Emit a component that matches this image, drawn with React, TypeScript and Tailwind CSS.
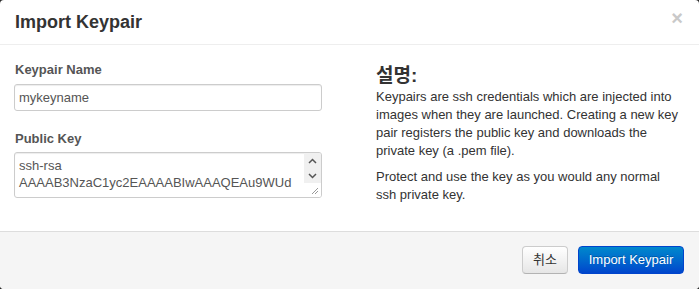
import React from 'react';

const font = "font-['Liberation_Sans','Noto_Sans_CJK_KR',sans-serif]";

const ScrollArrow = ({ up }: { up?: boolean }) => (
  <svg width="9" height="6" viewBox="0 0 9 6" className="block">
    <path
      d={up ? 'M1 5 L4.5 1.5 L8 5' : 'M1 1 L4.5 4.5 L8 1'}
      fill="none"
      stroke="#555"
      strokeWidth="1.5"
    />
  </svg>
);

const App: React.FC = () => {
  return (
    <div className={`w-[699px] h-[289px] bg-[#2a2a2a] ${font}`}>
      <div className="w-full h-full bg-white rounded-[4px] overflow-hidden flex flex-col">
        {/* Header */}
        <div className="h-[45px] shrink-0 border-b border-[#eee] flex items-start justify-between pl-[15px] pr-[16px]">
          <h3 className="mt-[7px] text-[18px] leading-[30px] font-bold text-[#333]">Import Keypair</h3>
          <span className="mt-[8px] text-[20px] leading-[20px] font-bold text-[#c9c9c9]">×</span>
        </div>

        {/* Body */}
        <div className="flex-1 flex pl-[14px] pr-[15px]">
          <div className="w-[308px] pt-[16px]">
            <label className="block text-[13px] leading-[18px] font-bold text-[#555] pl-[1px] mb-[5px]">Keypair Name</label>
            <div className="h-[27px] border border-[#ccc] rounded-[3px] shadow-[inset_0_1px_1px_rgba(0,0,0,0.075)] flex items-center px-[4px] text-[13px] text-[#555]">
              mykeyname
            </div>
            <label className="block mt-[19px] text-[13px] leading-[18px] font-bold text-[#555] pl-[1px] mb-[4px]">Public Key</label>
            <div className="h-[46px] border border-[#ccc] rounded-[3px] shadow-[inset_0_1px_1px_rgba(0,0,0,0.075)] flex overflow-hidden">
              <div className="flex-1 overflow-hidden pl-[4px] pt-[4px] text-[13px] leading-[17px] text-[#555] whitespace-nowrap">
                <div>ssh-rsa</div>
                <div>AAAAB3NzaC1yc2EAAAABIwAAAQEAu9WUd</div>
              </div>
              <div className="w-[17px] flex flex-col">
                <div className="h-[15px] bg-[#f0f0f0] flex items-center justify-center"><ScrollArrow up /></div>
                <div className="h-[15px] bg-[#f0f0f0] flex items-center justify-center"><ScrollArrow /></div>
                <div className="flex-1 bg-white flex items-end justify-end pr-[2px] pb-[2px]">
                  <svg width="8" height="8" viewBox="0 0 8 8">
                    <path d="M7 1 L1 7 M7 4 L4 7" stroke="#999" strokeWidth="1" />
                  </svg>
                </div>
              </div>
            </div>
          </div>

          <div className="w-[304px] ml-[54px] pt-[21px] text-[#333]">
            <h3 className="text-[19px] leading-[20px] font-bold mb-[2px]">설명:</h3>
            <p className="text-[13px] leading-[18px] mb-[8px]">
              Keypairs are ssh credentials which are injected into images when they are launched. Creating a new key pair registers the public key and downloads the private key (a .pem file).
            </p>
            <p className="text-[13px] leading-[18px]">
              Protect and use the key as you would any normal ssh private key.
            </p>
          </div>
        </div>

        {/* Footer */}
        <div className="h-[58px] shrink-0 border-t border-[#ddd] bg-[#f5f5f5] flex items-start justify-end gap-[10px] pt-[14px] pr-[15px]">
          <button className="h-[28px] w-[46px] rounded-[4px] border border-[#ccc] border-b-[#b3b3b3] bg-linear-to-b from-white to-[#e6e6e6] text-[13px] text-[#333]">
            취소
          </button>
          <button className="h-[28px] w-[106px] rounded-[4px] border border-[#0044cc] bg-linear-to-b from-[#0088cc] to-[#0044cc] text-[13px] text-white [text-shadow:0_-1px_0_rgba(0,0,0,0.25)]">
            Import Keypair
          </button>
        </div>
      </div>
    </div>
  );
};

export default App;
